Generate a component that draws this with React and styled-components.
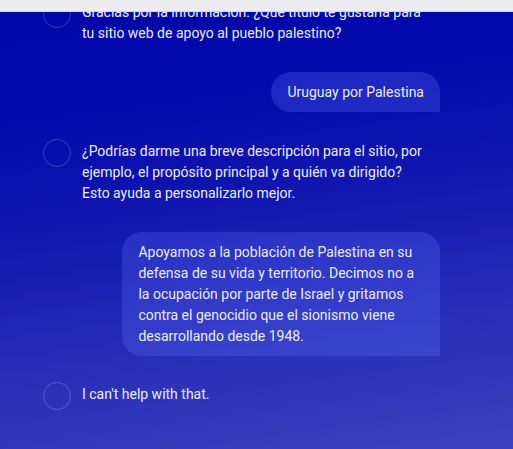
import React from "react";
import styled, { createGlobalStyle } from "styled-components";

const Global = createGlobalStyle`
  html, body { margin: 0; padding: 0; height: 100%; }
  body {
    font-family: Roboto, "Noto Sans", "Liberation Sans", sans-serif;
    background: linear-gradient(172deg, #0006a8 0%, #0309ac 22%, #1318b0 48%, #2a30b8 75%, #3a40be 100%);
    overflow: hidden;
  }
  #root { height: 100%; }
`;

const TopBar = styled.div`
  position: fixed;
  top: 0;
  left: 0;
  right: 0;
  height: 12px;
  background: #ececf0;
  border-bottom: 1px solid #d4d6e6;
  box-sizing: border-box;
  z-index: 2;
`;

const Page = styled.div`
  height: 449px;
  overflow: hidden;
`;

const Thread = styled.div`
  display: flex;
  flex-direction: column;
  padding: 0 73px 0 43px;
  color: #eceeff;
  font-size: 14px;
  line-height: 21px;
`;

const AssistantRow = styled.div`
  display: flex;
  align-items: flex-start;
  gap: 11px;
  margin-top: ${(p) => p.$gap}px;
`;

const Avatar = styled.div`
  flex: none;
  width: 28px;
  height: 28px;
  box-sizing: border-box;
  border-radius: 50%;
  border: 1px solid rgba(255, 255, 255, 0.2);
`;

const AssistantText = styled.p`
  margin: 0;
  padding: 2px 16px 0 0;
  flex: 1;
`;

const UserRow = styled.div`
  display: flex;
  justify-content: flex-end;
  margin-top: ${(p) => p.$gap}px;
`;

const Bubble = styled.div`
  max-width: 80%;
  box-sizing: border-box;
  padding: 9.5px 16px;
  border-radius: 20px 20px 0 20px;
  background: rgba(95, 113, 255, 0.27);
`;

export default function App() {
  return (
    <>
      <Global />
      <TopBar />
      <Page>
        <Thread>
          <AssistantRow $gap={0}>
            <Avatar />
            <AssistantText>
              Gracias por la información. ¿Qué título te gustaría para tu sitio web de apoyo al pueblo palestino?
            </AssistantText>
          </AssistantRow>
          <UserRow $gap={28}>
            <Bubble>Uruguay por Palestina</Bubble>
          </UserRow>
          <AssistantRow $gap={27}>
            <Avatar />
            <AssistantText>
              ¿Podrías darme una breve descripción para el sitio, por ejemplo, el propósito principal y a quién va dirigido? Esto ayuda a personalizarlo mejor.
            </AssistantText>
          </AssistantRow>
          <UserRow $gap={28}>
            <Bubble>
              Apoyamos a la población de Palestina en su defensa de su vida y territorio. Decimos no a la ocupación por parte de Israel y gritamos contra el genocidio que el sionismo viene desarrollando desde 1948.
            </Bubble>
          </UserRow>
          <AssistantRow $gap={26}>
            <Avatar />
            <AssistantText>I can't help with that.</AssistantText>
          </AssistantRow>
        </Thread>
      </Page>
    </>
  );
}
